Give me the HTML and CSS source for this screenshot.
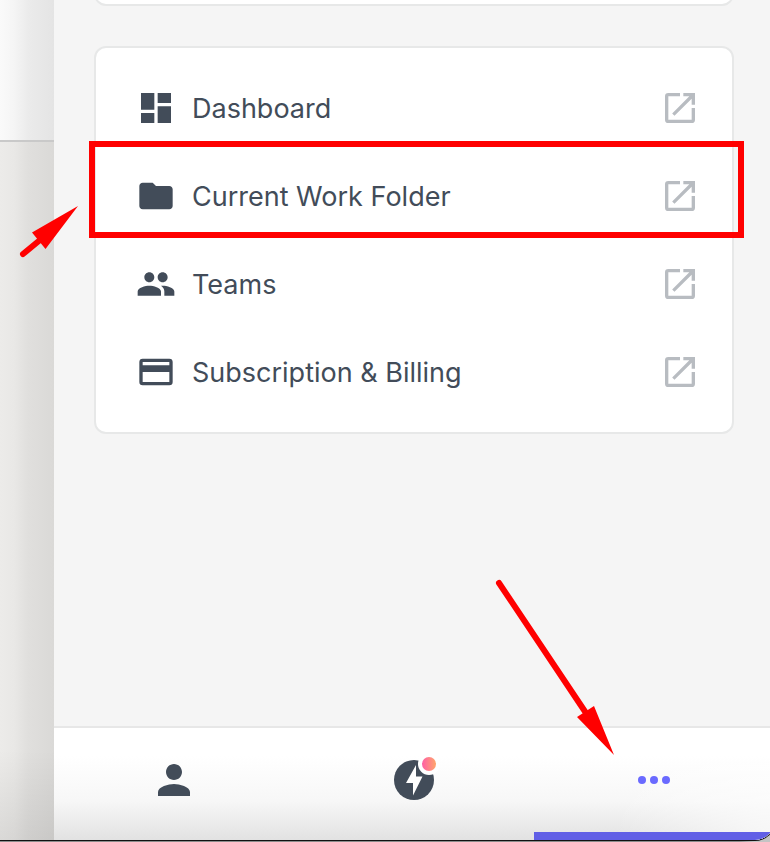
FILE: index.html
```
<!DOCTYPE html>
<html lang="en">
<head>
<meta charset="utf-8">
<meta name="viewport" content="width=device-width, initial-scale=1">
<title>Menu</title>
<link rel="stylesheet" href="styles.css">
</head>
<body>
<svg class="symbols" aria-hidden="true">
  <symbol id="open" viewBox="0 0 24 24"><path d="M12 3v2H5v14h14v-7h2v7a2 2 0 0 1-2 2H5a2 2 0 0 1-2-2V5a2 2 0 0 1 2-2zM14 3h7v7h-2V6.400L8.700 16.700l-1.400-1.400L17.600 5H14z"/></symbol>
</svg>
<div class="window">
  <div class="backdrop">
    <div class="backdrop-top"></div>
    <div class="backdrop-page"></div>
  </div>
  <div class="panel">
    <main class="content">
      <div class="card card-previous"></div>
      <nav class="card menu" aria-label="Menu">
        <a class="row" href="#dashboard">
          <svg class="icon" viewBox="0 0 24 24" aria-hidden="true"><path d="M3 13h8V3H3zm0 8h8v-6H3zm10 0h8V11h-8zm0-18v6h8V3z"/></svg>
          <span class="label">Dashboard</span>
          <svg class="icon open" aria-hidden="true"><use href="#open"/></svg>
        </a>
        <a class="row highlighted" href="#folder">
          <svg class="icon" viewBox="0 0 24 24" aria-hidden="true"><path d="M10 4H4c-1.100 0-2 .9-2 2v12c0 1.100.9 2 2 2h16c1.100 0 2-.9 2-2V8c0-1.100-.9-2-2-2h-8z"/></svg>
          <span class="label">Current Work Folder</span>
          <svg class="icon open" aria-hidden="true"><use href="#open"/></svg>
        </a>
        <a class="row" href="#teams">
          <svg class="icon" viewBox="0 0 24 24" aria-hidden="true"><path d="M16 11c1.660 0 2.990-1.340 2.990-3S17.660 5 16 5s-3 1.340-3 3 1.340 3 3 3zm-8 0c1.660 0 2.990-1.340 2.990-3S9.660 5 8 5 5 6.340 5 8s1.340 3 3 3zm0 2c-2.330 0-7 1.170-7 3.500V19h14v-2.500c0-2.330-4.670-3.500-7-3.500zm8 0c-.29 0-.62.020-.97.050 1.160.84 1.970 1.970 1.970 3.450V19h6v-2.500c0-2.330-4.670-3.500-7-3.500z"/></svg>
          <span class="label">Teams</span>
          <svg class="icon open" aria-hidden="true"><use href="#open"/></svg>
        </a>
        <a class="row" href="#billing">
          <svg class="icon" viewBox="0 0 24 24" aria-hidden="true"><path fill-rule="evenodd" d="M4 4h16a2 2 0 0 1 2 2v12a2 2 0 0 1-2 2H4a2 2 0 0 1-2-2V6a2 2 0 0 1 2-2zm0 2v2h16V6zm0 6v6h16v-6z"/></svg>
          <span class="label">Subscription &amp; Billing</span>
          <svg class="icon open" aria-hidden="true"><use href="#open"/></svg>
        </a>
      </nav>
    </main>
    <footer class="tabs">
      <button class="tab" type="button" aria-label="Profile">
        <svg class="tab-icon" viewBox="0 0 24 24" aria-hidden="true"><path d="M12 12c2.210 0 4-1.790 4-4s-1.790-4-4-4-4 1.790-4 4 1.790 4 4 4zm0 2c-2.670 0-8 1.340-8 4v2h16v-2c0-2.660-5.330-4-8-4z"/></svg>
      </button>
      <button class="tab" type="button" aria-label="Activity">
        <svg class="tab-icon" viewBox="0 0 48 48" aria-hidden="true">
          <defs><linearGradient id="dot"><stop stop-color="#ff5fa5"/><stop offset="1" stop-color="#ffa66b"/></linearGradient></defs>
          <circle cx="24" cy="24" r="20"/>
          <path fill="#fff" d="M26 9L16 27h7v12.500L32.500 20.500H26z"/>
          <circle cx="39" cy="8" r="11" fill="#fff"/>
          <circle cx="39" cy="8" r="7" fill="url(#dot)"/>
        </svg>
      </button>
      <button class="tab active" type="button" aria-label="More">
        <svg class="tab-icon" viewBox="0 0 24 24" aria-hidden="true"><circle cx="6" cy="12" r="2"/><circle cx="12" cy="12" r="2"/><circle cx="18" cy="12" r="2"/></svg>
      </button>
    </footer>
  </div>
</div>
<svg class="arrows" width="770" height="842" viewBox="0 0 770 842" aria-hidden="true">
  <g stroke="#f00" stroke-width="6" stroke-linecap="round"><path d="M23 254L40 240M499 583L586 713"/></g>
  <path fill="#f00" d="M78 206L32 232.500L45.500 249zM614 755L577 717L594 706z"/>
</svg>
</body>
</html>
```
FILE: styles.css
```
* {
  box-sizing: border-box;
}

body {
  margin: 0;
  padding-bottom: 1px;
  min-height: 100vh;
  display: flex;
  position: relative;
  overflow: hidden;
  background: linear-gradient(90deg, #8c8c8c 96%, #c4c4c4 98%);
  font-family: Inter, "Liberation Sans", sans-serif;
  color: #424c59;
}

.symbols {
  display: none;
}

.window {
  flex: 1;
  display: grid;
  grid-template-columns: 54px minmax(0, 1fr);
  margin-right: -5px;
  border-bottom: 1px solid #111;
  border-right: 1px solid #111;
  border-bottom-right-radius: 20px;
  overflow: hidden;
}

.backdrop {
  display: flex;
  flex-direction: column;
}

.backdrop-top {
  height: 142px;
  border-bottom: 2px solid #c9c9c9;
  background: linear-gradient(90deg, #fafafa, #f5f5f5 14px, #ebebeb 28px, #e4e4e4);
}

.backdrop-page {
  flex: 1;
  background:
    linear-gradient(0deg, rgb(0 0 0 / 8%), rgb(0 0 0 / 0%) 90px),
    linear-gradient(90deg, #ecebe9, #e9e8e6 14px, #e0dfdd 28px, #dad9d7);
}

.panel {
  display: flex;
  flex-direction: column;
  background: #f5f5f5;
}

.content {
  flex: 1;
  display: flex;
  flex-direction: column;
  gap: 40px;
  padding: 0 40px 40px;
}

.card {
  border: 2px solid #e7e8e8;
  border-radius: 12px;
  background: #fff;
}

.card-previous {
  height: 26px;
  margin-top: -20px;
}

.menu {
  padding: 16px 0;
}

.row {
  display: flex;
  align-items: center;
  gap: 16px;
  height: 88px;
  padding: 0 32px 0 40px;
  position: relative;
  color: inherit;
  font-size: 27px;
  line-height: 40px;
  text-decoration: none;
}

.highlighted::after {
  content: "";
  position: absolute;
  inset: -11px -12px 2px -7px;
  border: 6px solid #f00;
}

.label {
  flex: 1;
  padding-top: 2px;
}

.icon {
  width: 40px;
  height: 40px;
  fill: currentColor;
}

.open {
  color: #b8bcc1;
}

.tabs {
  display: grid;
  grid-template-columns: repeat(3, 1fr);
  height: 114px;
  border-top: 2px solid #e7e7e7;
  background:
    radial-gradient(circle at 100% 100%, rgb(255 255 255 / 70%), rgb(255 255 255 / 0%) 160px),
    linear-gradient(#fff 25%, #f7f7f7 65%, #e2e2e2);
}

.tab {
  display: flex;
  align-items: flex-start;
  justify-content: center;
  padding: 28px 0 0;
  border: 0;
  border-bottom: 8px solid transparent;
  background: none;
  color: #424c59;
}

.active {
  border-bottom-color: #615fe6;
  color: #6a6aff;
}

.tab-icon {
  width: 48px;
  height: 48px;
  overflow: visible;
  fill: currentColor;
}

.arrows {
  position: absolute;
  top: 0;
  left: 0;
  pointer-events: none;
}
```
